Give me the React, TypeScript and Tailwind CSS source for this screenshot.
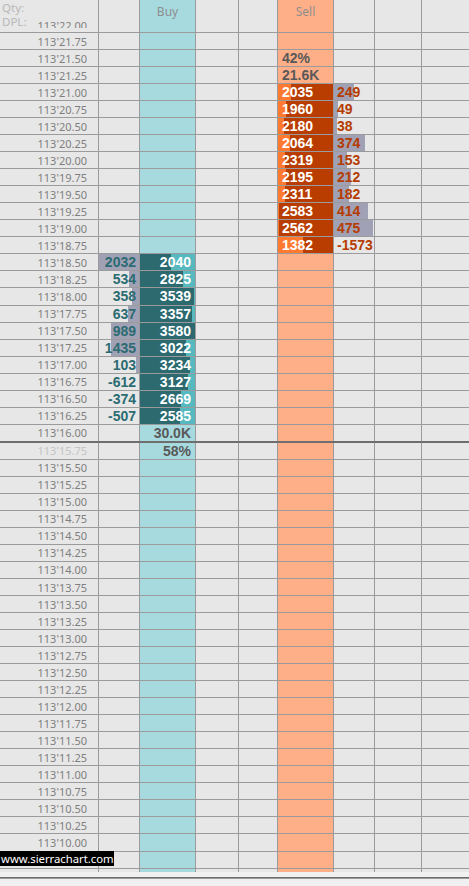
import React from "react";

const W = [
  "w-[99px]",
  "w-[41px]",
  "w-[56px]",
  "w-[43px]",
  "w-[39px]",
  "w-[56px]",
  "w-[41px]",
  "w-[47px]",
  "w-[47px]",
];

const sellVals = [2035, 1960, 2180, 2064, 2319, 2195, 2311, 2583, 2562, 1382];
const sellOrange = [13, 8, 6, 12, 7, 8, 7, 1, 1, 25];
const rightVals = [249, 49, 38, 374, 153, 212, 182, 414, 475, -1573];
const buyVals = [2040, 2825, 3539, 3357, 3580, 3022, 3234, 3127, 2669, 2585];
const leftVals = [2032, 534, 358, 637, 989, 1435, 103, -612, -374, -507];
const leftBars = [40, 10, 7, 11, 28, 28, 3, 0, 0, 0];

const NUM =
  "font-['Liberation_Sans',Arial,sans-serif] font-bold text-[14px] leading-[16px] whitespace-nowrap";
const PRICE = "font-['Noto_Sans',sans-serif] text-[11px] leading-[16px] whitespace-nowrap";

const prices = Array.from({ length: 48 }, (_, i) => 21.75 - 0.25 * i);

function Cell({
  col,
  className = "",
  style,
  children,
}: {
  col: number;
  className?: string;
  style?: React.CSSProperties;
  children?: React.ReactNode;
}) {
  const border = col < 8 ? "border-r border-r-[#9b9b9b]" : "";
  return (
    <div className={`${W[col]} shrink-0 h-full flex items-center ${border} ${className}`} style={style}>
      {children}
    </div>
  );
}

function DataRow({ i }: { i: number }) {
  const p = prices[i];
  const label = `113'${p.toFixed(2)}`;
  const thick = i === 23;
  const rowCls = thick
    ? "h-[18.04px] border-b-2 border-b-[#6e6e6e]"
    : "h-[17.04px] border-b border-b-[#9b9b9b]";

  let left: React.ReactNode = null;
  let leftStyle: React.CSSProperties | undefined;
  let buy: React.ReactNode = null;
  let buyStyle: React.CSSProperties | undefined;
  let sell: React.ReactNode = null;
  let sellStyle: React.CSSProperties | undefined;
  let right: React.ReactNode = null;
  let rightStyle: React.CSSProperties | undefined;

  if (i >= 13 && i <= 22) {
    const k = i - 13;
    const lb = leftBars[k];
    leftStyle = lb
      ? { background: `linear-gradient(to left, #a1a1b6 ${lb}px, transparent ${lb}px)` }
      : undefined;
    left = <span className={`${NUM} text-[#2b6b71]`}>{leftVals[k]}</span>;
    const d = Math.round((buyVals[k] / 3580) * 55);
    buyStyle = { background: `linear-gradient(to right, #2c6a6f ${d}px, #55b9bf ${d}px)` };
    buy = <span className={`${NUM} text-white`}>{buyVals[k]}</span>;
  }
  if (i === 23) buy = <span className={`${NUM} text-[#595959]`}>30.0K</span>;
  if (i === 24) buy = <span className={`${NUM} text-[#595959]`}>58%</span>;

  if (i >= 3 && i <= 12) {
    const k = i - 3;
    const o = sellOrange[k];
    sellStyle = { background: `linear-gradient(to right, #ff7a30 ${o}px, #b93d00 ${o}px)` };
    sell = <span className={`${NUM} text-white`}>{sellVals[k]}</span>;
    const rv = rightVals[k];
    const rb = rv > 0 ? Math.round((rv / 475) * 39) : 0;
    rightStyle = rb
      ? { background: `linear-gradient(to right, #a1a1b6 ${rb}px, transparent ${rb}px)` }
      : undefined;
    right = <span className={`${NUM} text-[#b53c00]`}>{rv}</span>;
  }
  if (i === 1) sell = <span className={`${NUM} text-[#595959]`}>42%</span>;
  if (i === 2) sell = <span className={`${NUM} text-[#595959]`}>21.6K</span>;

  return (
    <div className={`flex shrink-0 ${rowCls}`}>
      <Cell col={0} className="justify-end pr-[11px]">
        <span className={`${PRICE} pt-[1px] ${i === 24 ? "text-[#c4c4c4]" : "text-[#7f7f7f]"}`}>{label}</span>
      </Cell>
      <Cell col={1} className="justify-end pr-[3px]" style={leftStyle}>
        {left}
      </Cell>
      <Cell col={2} className="justify-end pr-[4px] bg-[#a7dadf]" style={buyStyle}>
        {buy}
      </Cell>
      <Cell col={3} />
      <Cell col={4} />
      <Cell col={5} className="justify-start pl-[4px] bg-[#ffaf88]" style={sellStyle}>
        {sell}
      </Cell>
      <Cell col={6} className="justify-start pl-[3px] overflow-visible" style={rightStyle}>
        {right}
      </Cell>
      <Cell col={7} />
      <Cell col={8} />
    </div>
  );
}

function EmptyRow({ className, first }: { className: string; first?: React.ReactNode }) {
  return (
    <div className={`flex shrink-0 ${className}`}>
      <Cell col={0} className="relative items-start">
        {first}
      </Cell>
      <Cell col={1} />
      <Cell col={2} className="bg-[#a7dadf]" />
      <Cell col={3} />
      <Cell col={4} />
      <Cell col={5} className="bg-[#ffaf88]" />
      <Cell col={6} />
      <Cell col={7} />
      <Cell col={8} />
    </div>
  );
}

export default function App() {
  return (
    <div className="w-[469px] h-[886px] flex flex-col bg-[#e7e7e7] overflow-hidden">
      {/* header */}
      <div className="flex shrink-0 h-[33px] border-b border-b-[#9b9b9b]">
        <Cell col={0} className="flex-col items-stretch justify-start">
          <div className="font-['Noto_Sans',sans-serif] text-[11.5px] leading-[12px] h-[12px] text-[#b8b8b8] pl-[2px] mt-[2px]">
            Qty:
          </div>
          <div className="flex items-start justify-between pl-[2px] mt-[2px]">
            <span className="font-['Noto_Sans',sans-serif] text-[11.5px] leading-[12px] text-[#b8b8b8]">DPL:</span>
            <div className="h-[10px] overflow-hidden mr-[11px] mt-[2px]">
              <div className={`${PRICE} leading-[13px] text-[#7f7f7f]`}>113'22.00</div>
            </div>
          </div>
        </Cell>
        <Cell col={1} />
        <Cell col={2} className="bg-[#a7dadf] justify-center items-start">
          <span className="font-['Noto_Sans',sans-serif] text-[12px] leading-[14px] text-[#8e8e8e] mt-[5px]">Buy</span>
        </Cell>
        <Cell col={3} />
        <Cell col={4} />
        <Cell col={5} className="bg-[#ffaf88] justify-center items-start">
          <span className="font-['Noto_Sans',sans-serif] text-[12px] leading-[14px] text-[#8e8e8e] mt-[5px]">Sell</span>
        </Cell>
        <Cell col={6} />
        <Cell col={7} />
        <Cell col={8} />
      </div>

      {prices.map((_, i) => (
        <DataRow key={i} i={i} />
      ))}

      <EmptyRow
        className="h-[17.04px] border-b border-b-[#9b9b9b]"
        first={
          <div className="absolute left-0 -top-[1px] w-[114px] h-[15px] bg-black flex items-center pl-[1px] z-10">
            <span className="font-['Noto_Sans',sans-serif] text-[11.3px] leading-[15px] text-white whitespace-nowrap">
              www.sierrachart.com
            </span>
          </div>
        }
      />
      <EmptyRow className="flex-1 min-h-0" />

      {/* status strip */}
      <div className="h-[14px] shrink-0 bg-[#f0f0f0] flex flex-col">
        <div className="h-[5px]" />
        <div className="h-[1px] bg-[#6c6c6c]" />
        <div className="h-[1px] bg-[#9a9a9a]" />
      </div>
    </div>
  );
}
